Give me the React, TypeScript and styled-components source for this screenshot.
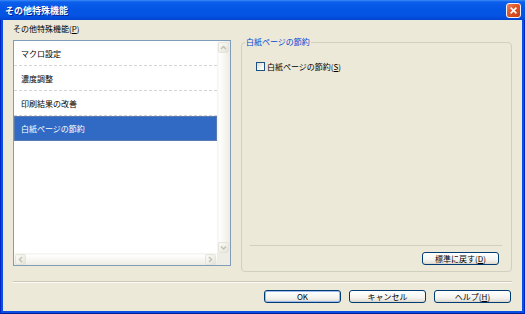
import React from 'react'
import styled, { createGlobalStyle, css } from 'styled-components'

const GlobalStyle = createGlobalStyle`
  html, body {
    margin: 0;
    padding: 0;
    background: #ece9d8;
  }
  body {
    font-family: "Noto Sans CJK JP", "Noto Sans", sans-serif;
    font-size: 8px;
    color: #000;
  }
  * {
    box-sizing: border-box;
  }
`

const Window = styled.div`
  width: 525px;
  height: 314px;
  display: flex;
  flex-direction: column;
  background: #0b4fe2;
  box-shadow: inset 1px 0 #0026c4, inset -1px 0 #0026c4, inset 0 -1px #001c96;
`

const TitleBar = styled.div`
  height: 20px;
  flex-shrink: 0;
  display: flex;
  align-items: center;
  justify-content: space-between;
  padding: 0 4px 0 5px;
  background: linear-gradient(
    to bottom,
    #3b8cf6 0,
    #0b5fea 2px,
    #0556e6 40%,
    #0453e2 80%,
    #0344d0 100%
  );
`

const TitleText = styled.span`
  color: #fff;
  font-size: 9px;
  font-weight: bold;
  text-shadow: 1px 1px #0a1f8a;
`

const CloseIcon = () => (
  <svg width="15" height="15" viewBox="0 0 15 15">
    <defs>
      <linearGradient id="closeFill" x1="0" y1="0" x2="1" y2="1">
        <stop offset="0" stopColor="#ef8764" />
        <stop offset="0.4" stopColor="#e2582c" />
        <stop offset="1" stopColor="#c93f15" />
      </linearGradient>
    </defs>
    <rect x="0.5" y="0.5" width="14" height="14" rx="2.5" fill="url(#closeFill)" stroke="#eef2fb" />
    <path d="M4.6 4.6 L10.4 10.4 M10.4 4.6 L4.6 10.4" stroke="#fff" strokeWidth="1.5" />
  </svg>
)

const Body = styled.div`
  flex: 1;
  margin: 0 3px 3px;
  background: #ece9d8;
  display: flex;
  flex-direction: column;
  padding: 0 10px;
`

const ContentRow = styled.div`
  height: 252px;
  display: flex;
  gap: 10px;
`

const LeftColumn = styled.div`
  width: 218px;
  display: flex;
  flex-direction: column;
`

const FieldLabel = styled.div`
  height: 20px;
  display: flex;
  align-items: center;
  padding-bottom: 4px;
`

const ListBox = styled.div`
  height: 226px;
  border: 1px solid #7f9db9;
  background: #fff;
  display: grid;
  grid-template-columns: 1fr 13px;
  grid-template-rows: 1fr 12px;
`

const Items = styled.div`
  overflow: hidden;
`

const ListItem = styled.div<{ $selected?: boolean }>`
  height: 25px;
  display: flex;
  align-items: center;
  padding-left: 7px;
  border-bottom: 1px dashed #d4d4d4;
  ${({ $selected }) =>
    $selected &&
    css`
      background: #316ac5;
      color: #fff;
      border-bottom: none;
      box-shadow: inset 0 0 0 1px #5b7bb0;
    `}
`

const VScroll = styled.div`
  display: flex;
  flex-direction: column;
  justify-content: space-between;
  background: linear-gradient(to right, #f3f2ec 0, #fefefe 20%, #f6f5f0 60%, #ecebe3 100%);
`

const HScroll = styled.div`
  display: flex;
  justify-content: space-between;
  background: linear-gradient(to bottom, #f3f2ec 0, #fefefe 20%, #f6f5f0 60%, #ecebe3 100%);
`

const Corner = styled.div`
  background: #eeede5;
`

const ScrollButton = styled.div`
  width: 11px;
  height: 11px;
  margin: 1px 1px 0;
  border: 1px solid #e6e4da;
  border-radius: 2px;
  background: linear-gradient(135deg, #fbfbf8 0%, #efeee7 60%, #e3e1d6 100%);
  display: flex;
  align-items: center;
  justify-content: center;
`

const GroupBox = styled.div`
  flex: 1;
  margin-top: 22px;
  height: 230px;
  border: 1px solid #d0d0bf;
  border-radius: 4px;
  position: relative;
  display: flex;
  flex-direction: column;
  padding: 18px 12px 6px 14px;
`

const GroupLegend = styled.span`
  position: absolute;
  top: -6px;
  left: 3px;
  padding: 0 1px;
  line-height: 10px;
  background: #ece9d8;
  color: #0046d5;
`

const CheckRow = styled.label`
  display: flex;
  align-items: center;
  gap: 2px;
  height: 10px;
`

const CheckBox = styled.span`
  width: 9px;
  height: 9px;
  border: 1px solid #1c5180;
  background: linear-gradient(135deg, #dcdcd4 0%, #f4f4f0 60%, #fff 100%);
`

const Spacer = styled.div`
  flex: 1;
`

const GroupSeparator = styled.div`
  height: 1px;
  background: #d0d0bf;
  margin: 0 -3px 6px -6px;
`

const ButtonRow = styled.div<{ $inGroup?: boolean }>`
  display: flex;
  justify-content: flex-end;
  gap: 8px;
  ${({ $inGroup }) =>
    !$inGroup &&
    css`
      margin-top: 7px;
      padding-right: 1px;
    `}
`

const Button = styled.div<{ $default?: boolean }>`
  width: 77px;
  height: 13px;
  border: 1px solid #003c74;
  border-radius: 3px;
  background: linear-gradient(to bottom, #fff 0%, #f5f4f0 60%, #e6e3d9 90%, #d6d0c5 100%);
  display: flex;
  align-items: center;
  justify-content: center;
  line-height: 1;
  ${({ $default }) =>
    $default &&
    css`
      box-shadow: inset 0 0 0 1px #9dbaf0;
    `}
`

const Separator = styled.div`
  margin-top: 9px;
  height: 2px;
  border-top: 1px solid #cdc9b9;
  border-bottom: 1px solid #fbfaf6;
`

const Arrow = ({ dir }: { dir: 'up' | 'down' | 'left' | 'right' }) => {
  const points = {
    up: '2,6 4.5,3.5 7,6',
    down: '2,3.5 4.5,6 7,3.5',
    left: '6,2 3.5,4.5 6,7',
    right: '3,2 5.5,4.5 3,7',
  }[dir]
  return (
    <svg width="9" height="9" viewBox="0 0 9 9">
      <polyline points={points} fill="none" stroke="#c4c2b4" strokeWidth="1.5" />
    </svg>
  )
}

const features = ['マクロ設定', '濃度調整', '印刷結果の改善', '白紙ページの節約']

export default function App() {
  const selected = 3
  return (
    <>
      <GlobalStyle />
      <Window>
        <TitleBar>
          <TitleText>その他特殊機能</TitleText>
          <CloseIcon />
        </TitleBar>
        <Body>
          <ContentRow>
            <LeftColumn>
              <FieldLabel>
                その他特殊機能(<u>P</u>)
              </FieldLabel>
              <ListBox>
                <Items>
                  {features.map((f, i) => (
                    <ListItem key={f} $selected={i === selected}>
                      {f}
                    </ListItem>
                  ))}
                </Items>
                <VScroll>
                  <ScrollButton>
                    <Arrow dir="up" />
                  </ScrollButton>
                  <ScrollButton>
                    <Arrow dir="down" />
                  </ScrollButton>
                </VScroll>
                <HScroll>
                  <ScrollButton>
                    <Arrow dir="left" />
                  </ScrollButton>
                  <ScrollButton>
                    <Arrow dir="right" />
                  </ScrollButton>
                </HScroll>
                <Corner />
              </ListBox>
            </LeftColumn>
            <GroupBox>
              <GroupLegend>白紙ページの節約</GroupLegend>
              <CheckRow>
                <CheckBox />
                <span>
                  白紙ページの節約(<u>S</u>)
                </span>
              </CheckRow>
              <Spacer />
              <GroupSeparator />
              <ButtonRow $inGroup>
                <Button>
                  標準に戻す(<u>D</u>)
                </Button>
              </ButtonRow>
            </GroupBox>
          </ContentRow>
          <Separator />
          <ButtonRow>
            <Button $default>OK</Button>
            <Button>キャンセル</Button>
            <Button>
              ヘルプ(<u>H</u>)
            </Button>
          </ButtonRow>
        </Body>
      </Window>
    </>
  )
}
